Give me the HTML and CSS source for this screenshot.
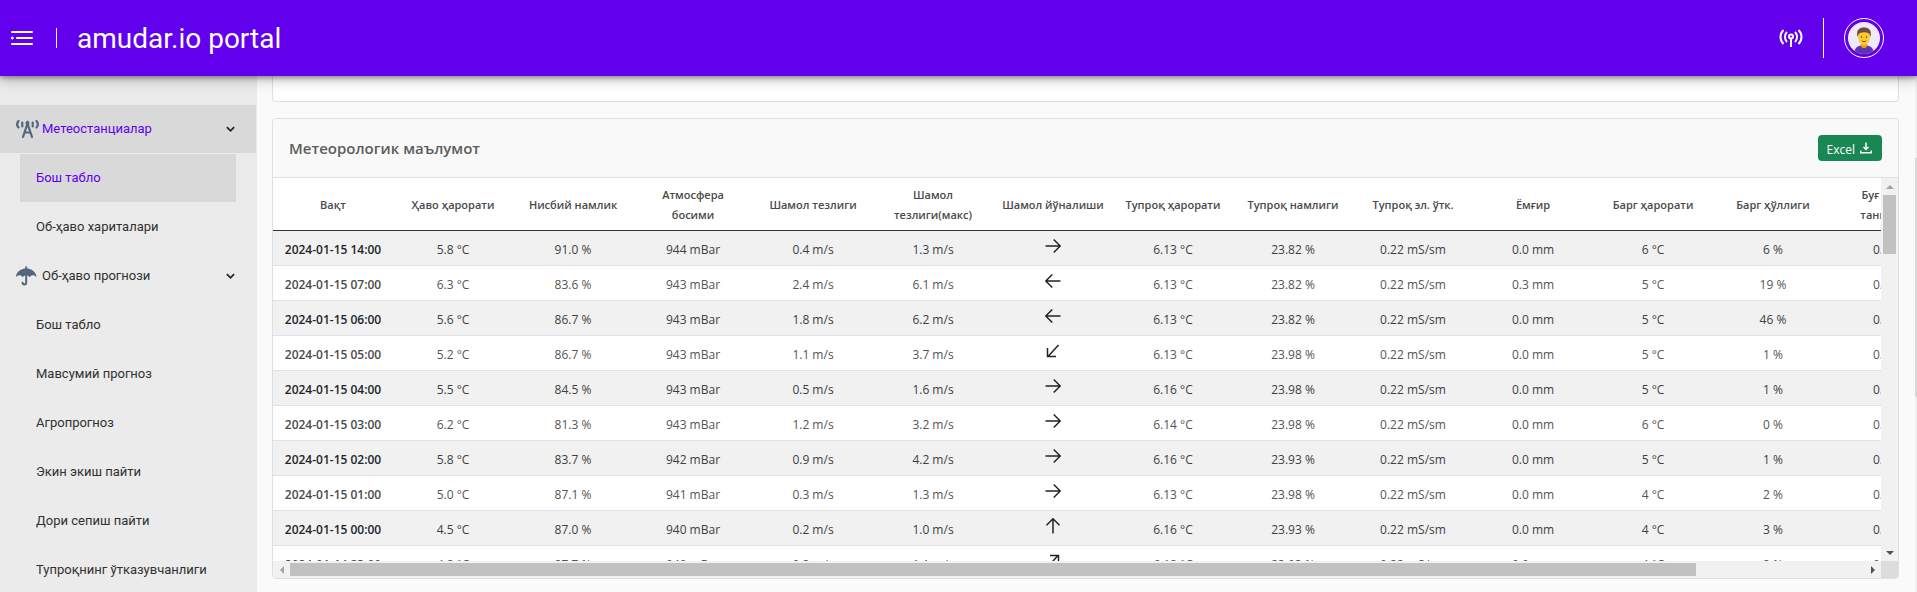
FILE: index.html
```html
<!DOCTYPE html>
<html lang="uz-Cyrl">
<head>
<meta charset="utf-8">
<title>amudar.io portal</title>
<meta name="viewport" content="width=device-width, initial-scale=1">
<link rel="stylesheet" href="styles.css">
</head>
<body>
<svg class="sprite" aria-hidden="true">
  <symbol id="arrow" viewBox="0 0 16 16"><path d="M0.5 8h14.5M8.7 1.5l6.500 6.500-6.500 6.500"/></symbol>
  <symbol id="arrow-diag" viewBox="0 0 16 16"><path d="M2.500 14L13 2.500M5 2.500h8.500v8.500"/></symbol>
</svg>
<header class="topbar">
  <button class="icon-button" type="button" aria-label="Меню">
    <svg class="menu-icon" viewBox="0 0 24 16"><path d="M2 2h20M7 8h15M2 14h20"/><circle cx="2.200" cy="8" r="1"/></svg>
  </button>
  <span class="brand-divider"></span>
  <h1 class="brand">amudar.io portal</h1>
  <div class="topbar-actions">
    <button class="icon-button" type="button" aria-label="Станциялар">
      <svg class="signal-icon" viewBox="0 0 24 20"><path d="M4.500 2C0.500 6 0.500 12 4.500 16M8 4C5.300 6.500 5.300 11.500 8 14M19.500 2c4 4 4 10 0 14M16 4c2.700 2.500 2.700 7.500 0 10M12 10.500V19"/><circle cx="12" cy="8.500" r="2"/></svg>
    </button>
    <span class="user-divider"></span>
    <button class="avatar" type="button" aria-label="Профиль">
      <svg viewBox="0 0 32 32"><defs><clipPath id="face-clip"><circle cx="16" cy="16" r="16"/></clipPath></defs>
        <g clip-path="url(#face-clip)"><rect width="32" height="32" fill="#eeeaf8"/>
        <path d="M6 32c0-5 3-8 7-8.500h6c4 .5 7 3.500 7 8.500z" fill="#5e35b1"/>
        <path d="M13 20h6v4.500q-3 3-6 0z" fill="#f2a600"/>
        <ellipse cx="16" cy="15.500" rx="5.800" ry="7.500" fill="#ffca28"/>
        <path d="M9.500 15C8 8 11 5.500 16 5.500S24 8 22.500 15L21 11.500q-4-2.500-10 0z" fill="#6d4c41"/>
        <circle cx="13.500" cy="15" r=".8" fill="#5d4037"/><circle cx="18.500" cy="15" r=".8" fill="#5d4037"/>
        <path d="M13.800 19q2.200 1.500 4.400 0" fill="none" stroke="#795548"/></g></svg>
    </button>
  </div>
</header>
<div class="shell">
  <nav class="sidebar">
    <a class="nav-group active" href="#stations">
      <svg class="nav-icon" viewBox="0 0 24 20"><g fill="none" stroke="#52677d" stroke-width="2.200" stroke-linecap="round"><path d="M2.500 2C.8 4 .8 6.500 2.500 8.500M20.500 2c1.700 2 1.700 4.500 0 6.500M6.300 3.500v4M16.700 3.500v4"/><path d="M7 18L11.500 4.500 16 18M8.500 13.500h6"/></g><circle cx="11.500" cy="4" r="2" fill="#52677d"/></svg>
      <span>Метеостанциалар</span>
      <svg class="chevron" viewBox="0 0 10 6"><path d="M1 1l4 4 4-4"/></svg>
    </a>
    <ul class="nav-list">
      <li><a class="active" href="#board">Бош табло</a></li>
      <li><a href="#maps">Об-ҳаво хариталари</a></li>
    </ul>
    <a class="nav-group" href="#forecast">
      <svg class="nav-icon" viewBox="0 0 24 20"><path fill="#52677d" d="M9.200 2.500V1.300a1 1 0 0 1 2 0v1.200C16 2.900 19.500 6 20.500 10c.1.500-.4.700-.8.400-2.200-1.900-4.400-1.200-5.700.4-.2.300-.6.300-.8 0-1.600-2-4.400-2-6 0-.2.300-.6.300-.8 0C5.100 9.200 2.900 8.500.7 10.400c-.4.300-.9.100-.8-.4C.9 6 4.400 2.900 9.200 2.500z"/><path fill="none" stroke="#52677d" stroke-width="2" stroke-linecap="round" d="M10.200 9v7.500c0 2.500-3.500 2.500-3.700.2"/></svg>
      <span>Об-ҳаво прогнози</span>
      <svg class="chevron" viewBox="0 0 10 6"><path d="M1 1l4 4 4-4"/></svg>
    </a>
    <ul class="nav-list">
      <li><a href="#forecast-board">Бош табло</a></li>
      <li><a href="#season">Мавсумий прогноз</a></li>
      <li><a href="#agro">Агропрогноз</a></li>
      <li><a href="#sowing">Экин экиш пайти</a></li>
      <li><a href="#spraying">Дори сепиш пайти</a></li>
      <li><a href="#soil">Тупроқнинг ўтказувчанлиги</a></li>
    </ul>
  </nav>
  <main class="content">
    <section class="card card-previous"></section>
    <section class="card card-data">
      <div class="card-header">
        <h2>Метеорологик маълумот</h2>
        <button class="excel" type="button">Excel
          <svg viewBox="0 0 12 12"><path d="M6 .5v7M3.500 5L6 7.500 8.500 5M.7 8.500v2.300h10.600V8.500"/></svg>
        </button>
      </div>
      <div class="scroller">
        <div class="viewport">
          <table>
            <thead>
              <tr><th scope="col">Вақт</th><th scope="col">Ҳаво ҳарорати</th><th scope="col">Нисбий намлик</th><th scope="col">Атмосфера босими</th><th scope="col">Шамол тезлиги</th><th scope="col">Шамол тезлиги(макс)</th><th scope="col">Шамол йўналиши</th><th scope="col">Тупроқ ҳарорати</th><th scope="col">Тупроқ намлиги</th><th scope="col">Тупроқ эл. ўтк.</th><th scope="col">Ёмғир</th><th scope="col">Барг ҳарорати</th><th scope="col">Барг ҳўллиги</th><th scope="col">Буғ босими танқислиги</th></tr>
            </thead>
            <tbody>
              <tr><th scope="row">2024-01-15 14:00</th><td>5.8 °C</td><td>91.0 %</td><td>944 mBar</td><td>0.4 m/s</td><td>1.3 m/s</td><td><svg class="wind"><use href="#arrow"/></svg></td><td>6.13 °C</td><td>23.82 %</td><td>0.22 mS/sm</td><td>0.0 mm</td><td>6 °C</td><td>6 %</td><td>0.1 kPa</td></tr>
              <tr><th scope="row">2024-01-15 07:00</th><td>6.3 °C</td><td>83.6 %</td><td>943 mBar</td><td>2.4 m/s</td><td>6.1 m/s</td><td><svg class="wind west"><use href="#arrow"/></svg></td><td>6.13 °C</td><td>23.82 %</td><td>0.22 mS/sm</td><td>0.3 mm</td><td>5 °C</td><td>19 %</td><td>0.1 kPa</td></tr>
              <tr><th scope="row">2024-01-15 06:00</th><td>5.6 °C</td><td>86.7 %</td><td>943 mBar</td><td>1.8 m/s</td><td>6.2 m/s</td><td><svg class="wind west"><use href="#arrow"/></svg></td><td>6.13 °C</td><td>23.82 %</td><td>0.22 mS/sm</td><td>0.0 mm</td><td>5 °C</td><td>46 %</td><td>0.1 kPa</td></tr>
              <tr><th scope="row">2024-01-15 05:00</th><td>5.2 °C</td><td>86.7 %</td><td>943 mBar</td><td>1.1 m/s</td><td>3.7 m/s</td><td><svg class="wind west"><use href="#arrow-diag"/></svg></td><td>6.13 °C</td><td>23.98 %</td><td>0.22 mS/sm</td><td>0.0 mm</td><td>5 °C</td><td>1 %</td><td>0.1 kPa</td></tr>
              <tr><th scope="row">2024-01-15 04:00</th><td>5.5 °C</td><td>84.5 %</td><td>943 mBar</td><td>0.5 m/s</td><td>1.6 m/s</td><td><svg class="wind"><use href="#arrow"/></svg></td><td>6.16 °C</td><td>23.98 %</td><td>0.22 mS/sm</td><td>0.0 mm</td><td>5 °C</td><td>1 %</td><td>0.1 kPa</td></tr>
              <tr><th scope="row">2024-01-15 03:00</th><td>6.2 °C</td><td>81.3 %</td><td>943 mBar</td><td>1.2 m/s</td><td>3.2 m/s</td><td><svg class="wind"><use href="#arrow"/></svg></td><td>6.14 °C</td><td>23.98 %</td><td>0.22 mS/sm</td><td>0.0 mm</td><td>6 °C</td><td>0 %</td><td>0.1 kPa</td></tr>
              <tr><th scope="row">2024-01-15 02:00</th><td>5.8 °C</td><td>83.7 %</td><td>942 mBar</td><td>0.9 m/s</td><td>4.2 m/s</td><td><svg class="wind"><use href="#arrow"/></svg></td><td>6.16 °C</td><td>23.93 %</td><td>0.22 mS/sm</td><td>0.0 mm</td><td>5 °C</td><td>1 %</td><td>0.1 kPa</td></tr>
              <tr><th scope="row">2024-01-15 01:00</th><td>5.0 °C</td><td>87.1 %</td><td>941 mBar</td><td>0.3 m/s</td><td>1.3 m/s</td><td><svg class="wind"><use href="#arrow"/></svg></td><td>6.13 °C</td><td>23.98 %</td><td>0.22 mS/sm</td><td>0.0 mm</td><td>4 °C</td><td>2 %</td><td>0.1 kPa</td></tr>
              <tr><th scope="row">2024-01-15 00:00</th><td>4.5 °C</td><td>87.0 %</td><td>940 mBar</td><td>0.2 m/s</td><td>1.0 m/s</td><td><svg class="wind north"><use href="#arrow"/></svg></td><td>6.16 °C</td><td>23.93 %</td><td>0.22 mS/sm</td><td>0.0 mm</td><td>4 °C</td><td>3 %</td><td>0.1 kPa</td></tr>
              <tr><th scope="row">2024-01-14 23:00</th><td>4.8 °C</td><td>87.7 %</td><td>940 mBar</td><td>0.2 m/s</td><td>1.1 m/s</td><td><svg class="wind"><use href="#arrow-diag"/></svg></td><td>6.18 °C</td><td>23.93 %</td><td>0.22 mS/sm</td><td>0.0 mm</td><td>4 °C</td><td>2 %</td><td>0.1 kPa</td></tr>
            </tbody>
          </table>
        </div>
        <div class="bar bar-y"><i class="tip up"></i><span class="track"><span class="thumb"></span></span><i class="tip down"></i></div>
        <div class="bar bar-x"><i class="tip left"></i><span class="track"><span class="thumb"></span></span><i class="tip right"></i></div>
        <div class="corner"></div>
      </div>
    </section>
  </main>
  <div class="page-scroll"><span></span></div>
</div>
</body>
</html>
```
FILE: styles.css
```css
* { box-sizing: border-box; }

body {
  margin: 0;
  height: 100vh;
  display: flex;
  flex-direction: column;
  overflow: hidden;
  background: #fafafa;
  color: #212529;
  font-family: "Open Sans", "Noto Sans", sans-serif;
}

.sprite { position: absolute; width: 0; height: 0; }
svg { display: block; }
button { font: inherit; cursor: pointer; }

.topbar {
  position: relative;
  z-index: 2;
  flex: none;
  display: flex;
  align-items: center;
  height: 76px;
  padding: 0 33px 0 10px;
  background: #6200ee;
  color: #fff;
  box-shadow: 0 2px 4px rgba(0, 0, 0, .3), 0 4px 12px rgba(0, 0, 0, .25);
}

.icon-button { padding: 0; border: 0; background: none; color: inherit; }
.menu-icon { width: 24px; height: 16px; fill: #fff; stroke: #fff; stroke-width: 2; stroke-linecap: round; }
.menu-icon circle { stroke-width: 1; }
.brand-divider { width: 1px; height: 20px; margin: 0 20px 0 22px; background: #fff; }
.brand { margin: 0; padding-top: 2px; font: 400 28px/36px Roboto, sans-serif; }
.topbar-actions { display: flex; align-items: center; margin-left: auto; }
.signal-icon { width: 24px; height: 20px; fill: none; stroke: #fff; stroke-width: 2; }
.user-divider { width: 1px; height: 40px; margin: 0 20px; background: #fff; }

.avatar {
  width: 40px;
  height: 40px;
  padding: 3px;
  border: 1px solid #fff;
  border-radius: 50%;
  background: none;
}

.shell { flex: 1; display: flex; min-height: 0; }

.sidebar {
  flex: none;
  width: 257px;
  padding-top: 29px;
  overflow: hidden;
  background: #ebebeb;
  font: 400 13px/16px Roboto, sans-serif;
}
.sidebar a { color: #303030; text-decoration: none; }
.sidebar .active { background: #d9d9d9; color: #6200ee; }

.nav-group {
  display: flex;
  align-items: center;
  gap: 2px;
  height: 48px;
  margin: 0 1px 1px 0;
  padding: 0 21px 0 16px;
}
.nav-icon { width: 24px; height: 20px; }
.chevron { width: 9px; height: 6px; margin-left: auto; fill: none; stroke: #222; stroke-width: 2; overflow: visible; }
.nav-list { margin: 0; padding: 0 21px 0 20px; list-style: none; }
.nav-list a { display: flex; align-items: center; height: 48px; margin-bottom: 1px; padding: 0 16px; white-space: nowrap; }

.content {
  flex: 1;
  min-width: 0;
  display: flex;
  flex-direction: column;
  gap: 16px;
  padding: 0 16px 13px 15px;
}
.card { border: 1px solid #dfdfdf; border-radius: 4px; background: #fff; }
.card-previous { flex: none; height: 26px; border-top: 0; border-radius: 0 0 4px 4px; }
.card-data { flex: 1; min-height: 0; display: flex; flex-direction: column; overflow: hidden; }

.card-header {
  flex: none;
  display: flex;
  align-items: center;
  justify-content: space-between;
  height: 59px;
  padding: 0 16px;
  border-bottom: 1px solid #dfdfdf;
  background: #f9f9f9;
}
.card-header h2 { margin: 0; font-size: 15px; line-height: 24px; font-weight: 600; color: #5c5c5c; }

.excel {
  display: flex;
  align-items: center;
  gap: 5px;
  height: 26px;
  padding: 2px 10px 0 9px;
  border: 0;
  border-radius: 4px;
  background: #198754;
  color: #fff;
  font-size: 12px;
}
.excel svg { width: 12px; height: 12px; margin-bottom: 3px; fill: none; stroke: #fff; stroke-width: 1.5; }

.scroller {
  flex: 1;
  min-height: 0;
  display: grid;
  grid-template: minmax(0, 1fr) 17px / minmax(0, 1fr) 17px;
}
.viewport { overflow: hidden; }

table { width: 1680px; table-layout: fixed; border-collapse: separate; border-spacing: 0; font-size: 12px; line-height: 20px; text-align: center; }
th, td { padding: 0; }
thead th { height: 53px; padding: 2px 8px 0; border-bottom: 1px solid #333; font-size: 11px; font-weight: 600; color: #4a4a4a; vertical-align: middle; }
tbody th, tbody td { height: 35px; padding: 4px 0 0; border-bottom: 1px solid #dee2e6; color: #555; }
tbody th { font-weight: 600; color: #4a4a4a; }
tbody tr:nth-child(odd) > td { background: #f1f1f1; color: #3c3f42; }
tbody tr:nth-child(odd) > th { background: #f1f1f1; color: #212529; }

.wind { width: 16px; height: 16px; margin: -8px auto 0; fill: none; stroke: #212529; stroke-width: 1.5; }
.wind.west { transform: rotate(180deg); }
.wind.north { transform: rotate(-90deg); }

.bar { display: flex; background: #f1f1f1; }
.bar-y { flex-direction: column; align-items: center; }
.bar-x { align-items: center; }
.track { flex: 1; display: flex; }
.bar-y .track { flex-direction: column; width: 13px; }
.bar-x .track { height: 13px; }
.thumb { background: #c1c1c1; }
.bar-y .thumb { height: 17%; }
.bar-x .thumb { width: calc(100% * 67 / 75); }
.tip { flex: none; display: grid; place-items: center; width: 17px; height: 17px; }
.tip::before { content: ""; border: 4px solid transparent; }
.up::before { border-top: 0; border-bottom-color: #a3a3a3; }
.down::before { border-bottom: 0; border-top-color: #505050; }
.left::before { border-left: 0; border-right-color: #a3a3a3; }
.right::before { border-right: 0; border-left-color: #505050; }
.corner { background: #dcdcdc; }

.page-scroll { flex: none; width: 2px; padding-top: 82px; background: #f1f1f1; }
.page-scroll span { display: block; height: 55%; background: #d8d8d8; }
```
